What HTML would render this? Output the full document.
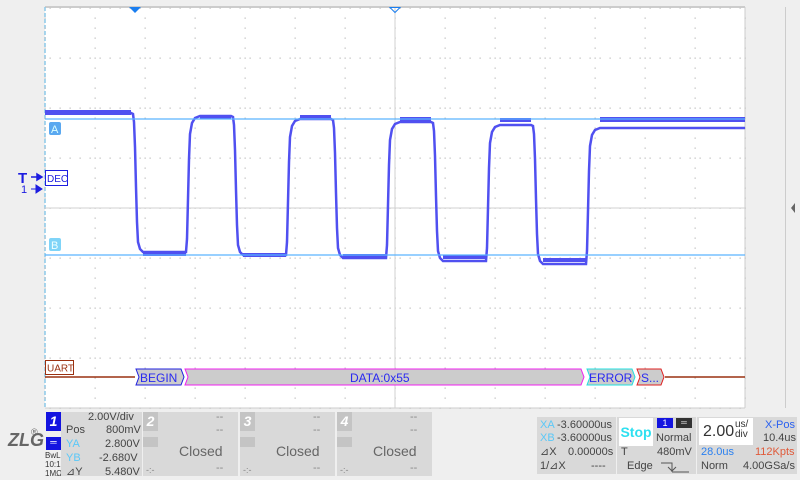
<!DOCTYPE html>
<html><head><meta charset="utf-8"><style>
*{margin:0;padding:0;box-sizing:border-box}
body{width:800px;height:480px;background:#efefef;position:relative;overflow:hidden;font-family:"Liberation Sans","DejaVu Sans",sans-serif;color:#444}
.a{position:absolute}
.t{position:absolute;font-size:11px;white-space:nowrap;line-height:13px}
.p{background:#d9d9d9}
</style></head><body>
<svg class="a" style="left:0;top:0" width="800" height="410">
<rect x="45" y="7" width="700" height="401" fill="#fff"/>
<line x1="45" y1="7" x2="745" y2="7" stroke="#ccc" stroke-width="2"/>
<line x1="745" y1="7" x2="745" y2="408" stroke="#ccc" stroke-width="1"/>
<line x1="45" y1="408" x2="745" y2="408" stroke="#ccc" stroke-width="1"/>
<line x1="785.5" y1="7" x2="785.5" y2="408" stroke="#ccc"/>
<path d="M795,203 L791,208 L795,213Z" fill="#666"/>
<line x1="45" y1="7" x2="45" y2="408" stroke="#8cc8e8" stroke-width="1.5" stroke-dasharray="4,2"/>
<g id="g"></g>
<line x1="45" y1="208" x2="745" y2="208" stroke="#d0d0d0"/>
<line x1="395" y1="7" x2="395" y2="408" stroke="#d0d0d0"/>
<path d="M45,113 H131 l2,1 l1,8 l1,25 l1,40 l1,35 l1,20 l2,7 l3,3 H186 l1,-13 l1,-40 l1,-40 l1,-25 l2,-11 l3,-5 l5,-2 H231 l2,1 l1,8 l1,25 l1,40 l1,35 l1,20 l2,7 l3,3 H286 l1,-13 l1,-40 l1,-40 l1,-25 l2,-11 l3,-5 l5,-2 H331 l2,1 l1,8 l1,25 l1,40 l1,35 l1,20 l2,7 l3,3 H386 l1,-13 l1,-40 l1,-40 l1,-25 l2,-11 l3,-5 l5,-2 H431 l2,1 l1,8 l1,25 l1,40 l1,35 l1,20 l2,7 l3,3 H486 l1,-13 l1,-40 l1,-40 l1,-25 l2,-11 l3,-5 l5,-2 H531 l2,1 l1,8 l1,25 l1,40 l1,35 l1,20 l2,7 l3,3 H586 l1,-13 l1,-40 l1,-40 l1,-25 l2,-11 l3,-5 l5,-2 H745" fill="none" stroke="#5050f0" stroke-width="2.5"/>
<g fill="#5050f0">
<rect x="45" y="110" width="86" height="5"/><rect x="143" y="252" width="43" height="4"/>
<rect x="200" y="115" width="31" height="4"/><rect x="243" y="253" width="43" height="4"/>
<rect x="300" y="115" width="31" height="4"/><rect x="343" y="254" width="43" height="4"/>
<rect x="400" y="117" width="31" height="4"/><rect x="443" y="255" width="43" height="4"/>
<rect x="500" y="118" width="31" height="4"/><rect x="543" y="258" width="43" height="4"/>
<rect x="600" y="117" width="145" height="5"/>
</g>
<line x1="45" y1="119" x2="745" y2="119" stroke="#5ab4ff" stroke-width="1.2"/>
<line x1="45" y1="255" x2="745" y2="255" stroke="#5ab4ff" stroke-width="1.2"/>
<rect x="49" y="122" width="12" height="13" rx="2" fill="#5aa8f0"/>
<text x="51" y="133" font-size="11" fill="#dff" font-family="Liberation Sans">A</text>
<rect x="49" y="238" width="12" height="13" rx="2" fill="#7fd4f8"/>
<text x="51" y="249" font-size="11" fill="#eff" font-family="Liberation Sans">B</text>
<path d="M129,7 H141 L135,13Z" fill="#1a7ef0"/>
<path d="M390,7.5 H400 L395,12.5Z" fill="none" stroke="#1a7ef0"/>
<text x="18" y="183" font-size="15" font-weight="bold" fill="#1d1de0" font-family="Liberation Sans">T</text>
<path d="M31,177 H38 M37,174 L42,177 L37,180Z" stroke="#1d1de0" fill="#1d1de0" stroke-width="1.5"/>
<text x="21" y="193" font-size="11" fill="#1d1de0" font-family="Liberation Sans">1</text>
<path d="M31,189 H37 M36,185 L42,189 L36,193Z" stroke="#1d1de0" fill="#1d1de0"/>
<rect x="45.5" y="170.5" width="22" height="15" fill="#fff" stroke="#1d1de0"/>
<text x="47" y="182" font-size="10" fill="#1d1de0" font-family="Liberation Sans">DEC</text>
<rect x="45.5" y="360.5" width="28" height="14" fill="#fff" stroke="#9a3010"/>
<text x="47" y="371.5" font-size="10" fill="#9a3010" font-family="Liberation Sans">UART</text>
<line x1="45" y1="377" x2="135" y2="377" stroke="#9a3010" stroke-width="1.5"/>
<line x1="665" y1="377" x2="745" y2="377" stroke="#9a3010" stroke-width="1.5"/>
<path d="M136,369 H181 L184,377 L181,385 H136 L139,377Z" fill="#ccc" stroke="#2020e0"/>
<text x="140" y="382" font-size="12" fill="#2a2af0" font-family="Liberation Sans">BEGIN</text>
<path d="M185,369 H581 L584,377 L581,385 H185 L188,377Z" fill="#ccc" stroke="#f020f0"/>
<text x="350" y="382" font-size="12" fill="#2a2af0" font-family="Liberation Sans">DATA:0x55</text>
<path d="M587,369 H632 L635,377 L632,385 H587 L590,377Z" fill="#ccc" stroke="#20e0e0"/>
<text x="589" y="382" font-size="12" fill="#2a2af0" font-family="Liberation Sans">ERROR</text>
<path d="M637,369 H661 L664,377 L661,385 H637 L640,377Z" fill="#ccc" stroke="#e02020"/>
<text x="641" y="382" font-size="12" fill="#2a2af0" font-family="Liberation Sans">S...</text>
</svg>
<script>
var s='',g=document.getElementById('g');
for(var x=45;x<=745;x+=50)for(var y=18;y<408;y+=10)s+='<rect xmlns="http://www.w3.org/2000/svg" x="'+(x-0.5)+'" y="'+(y-0.5)+'" width="1.3" height="1.3" fill="#c4c4c4"/>';
for(var y=8;y<=408;y+=50)for(var x=50;x<745;x+=10)s+='<rect x="'+(x-0.5)+'" y="'+(y-0.5)+'" width="1.3" height="1.3" fill="#c4c4c4"/>';
g.innerHTML=s;
</script>

<div class="t" style="left:8px;top:430px;font-size:18px;line-height:20px;font-style:italic;font-weight:bold;color:#666">ZLG</div>
<div class="t" style="left:31px;top:426px;font-size:9px;color:#666">®</div>
<div class="a" style="left:46px;top:412px;width:15px;height:19px;background:#1414e0;color:#fff;font-size:14px;font-weight:bold;font-style:italic;text-align:center;line-height:19px">1</div>
<div class="a" style="left:46px;top:437px;width:15px;height:13px;background:#1414e0;color:#fff;font-size:9px;text-align:center;line-height:11px">═</div>
<div class="t" style="left:45px;top:451px;font-size:8px;line-height:9px;color:#333">BwL<br>10:1<br>1MΩ</div>
<div class="a p" style="left:61px;top:412px;width:81px;height:64px"></div>
<div class="t" style="left:88px;top:411px;color:#444">2.00V/div</div>
<div class="t" style="left:66px;top:424px;color:#444">Pos</div><div class="t" style="left:106px;top:424px">800mV</div>
<div class="t" style="left:66px;top:438px;color:#5ac8f8">YA</div><div class="t" style="left:105px;top:438px">2.800V</div>
<div class="t" style="left:66px;top:452px;color:#5ac8f8">YB</div><div class="t" style="left:99px;top:452px">-2.680V</div>
<div class="t" style="left:66px;top:466px">⊿Y</div><div class="t" style="left:105px;top:466px">5.480V</div>

<div class="a p" style="left:143px;top:412px;width:95px;height:64px"></div>
<div class="a p" style="left:240px;top:412px;width:95px;height:64px"></div>
<div class="a p" style="left:337px;top:412px;width:95px;height:64px"></div>
<div class="a" style="left:143px;top:412px;width:15px;height:19px;background:#c4c4c4;color:#fff;font-size:14px;font-weight:bold;font-style:italic;text-align:center;line-height:19px">2</div>
<div class="a" style="left:240px;top:412px;width:15px;height:19px;background:#c4c4c4;color:#fff;font-size:14px;font-weight:bold;font-style:italic;text-align:center;line-height:19px">3</div>
<div class="a" style="left:337px;top:412px;width:15px;height:19px;background:#c4c4c4;color:#fff;font-size:14px;font-weight:bold;font-style:italic;text-align:center;line-height:19px">4</div>
<div class="a" style="left:143px;top:437px;width:15px;height:10px;background:#c4c4c4"></div>
<div class="a" style="left:240px;top:437px;width:15px;height:10px;background:#c4c4c4"></div>
<div class="a" style="left:337px;top:437px;width:15px;height:10px;background:#c4c4c4"></div>
<div class="t" style="left:179px;top:443px;font-size:14px;line-height:16px;color:#666">Closed</div>
<div class="t" style="left:276px;top:443px;font-size:14px;line-height:16px;color:#666">Closed</div>
<div class="t" style="left:373px;top:443px;font-size:14px;line-height:16px;color:#666">Closed</div>
<div class="t" style="left:216px;top:411px;color:#888">--</div><div class="t" style="left:216px;top:424px;color:#888">--</div><div class="t" style="left:216px;top:462px;color:#888">--</div><div class="t" style="left:146px;top:464px;color:#888;font-size:9px">-:-</div>
<div class="t" style="left:313px;top:411px;color:#888">--</div><div class="t" style="left:313px;top:424px;color:#888">--</div><div class="t" style="left:313px;top:462px;color:#888">--</div><div class="t" style="left:243px;top:464px;color:#888;font-size:9px">-:-</div>
<div class="t" style="left:410px;top:411px;color:#888">--</div><div class="t" style="left:410px;top:424px;color:#888">--</div><div class="t" style="left:410px;top:462px;color:#888">--</div><div class="t" style="left:340px;top:464px;color:#888;font-size:9px">-:-</div>

<div class="a p" style="left:537px;top:417px;width:79px;height:57px"></div>
<div class="t" style="left:540px;top:419px;color:#5ac8f8">XA</div><div class="t" style="left:557px;top:419px">-3.60000us</div>
<div class="t" style="left:540px;top:432px;color:#5ac8f8">XB</div><div class="t" style="left:557px;top:432px">-3.60000us</div>
<div class="t" style="left:540px;top:446px">⊿X</div><div class="t" style="left:568px;top:446px">0.00000s</div>
<div class="t" style="left:540px;top:460px">1/⊿X</div><div class="t" style="left:591px;top:460px">----</div>
<div class="a p" style="left:617px;top:417px;width:79px;height:57px"></div>
<div class="a" style="left:619px;top:418px;width:34px;height:28px;background:#fff;color:#2ee0f0;font-size:14px;font-weight:bold;text-align:center;line-height:28px">Stop</div>
<div class="a" style="left:657px;top:418px;width:16px;height:10px;background:#1414e0;color:#fff;font-size:9px;text-align:center;line-height:10px">1</div>
<div class="a" style="left:676px;top:418px;width:16px;height:10px;background:#333;color:#fff;font-size:8px;text-align:center;line-height:10px">═</div>
<div class="t" style="left:656px;top:432px">Normal</div>
<div class="t" style="left:621px;top:446px">T</div><div class="t" style="left:657px;top:446px">480mV</div>
<div class="t" style="left:627px;top:460px">Edge</div>
<svg class="a" style="left:660px;top:462px" width="30" height="12"><path d="M1,1 H12 V10 M8,5 L12,9 L16,5 M12,10 H29" stroke="#555" fill="none"/></svg>
<div class="a p" style="left:697px;top:417px;width:100px;height:57px"></div>
<div class="a" style="left:699px;top:418px;width:54px;height:27px;background:#fff"></div>
<div class="t" style="left:703px;top:423px;font-size:16px;line-height:18px;color:#333">2.00</div>
<div class="t" style="left:735px;top:420px;font-size:10px;line-height:10px;color:#333">us/<br>div</div>
<div class="t" style="left:765px;top:419px;color:#2a60f0">X-Pos</div>
<div class="t" style="left:763px;top:432px">10.4us</div>
<div class="t" style="left:701px;top:446px;color:#2a80f0">28.0us</div>
<div class="t" style="left:755px;top:446px;color:#e05a3a">112Kpts</div>
<div class="t" style="left:701px;top:460px">Norm</div>
<div class="t" style="left:743px;top:460px">4.00GSa/s</div>
</body></html>
